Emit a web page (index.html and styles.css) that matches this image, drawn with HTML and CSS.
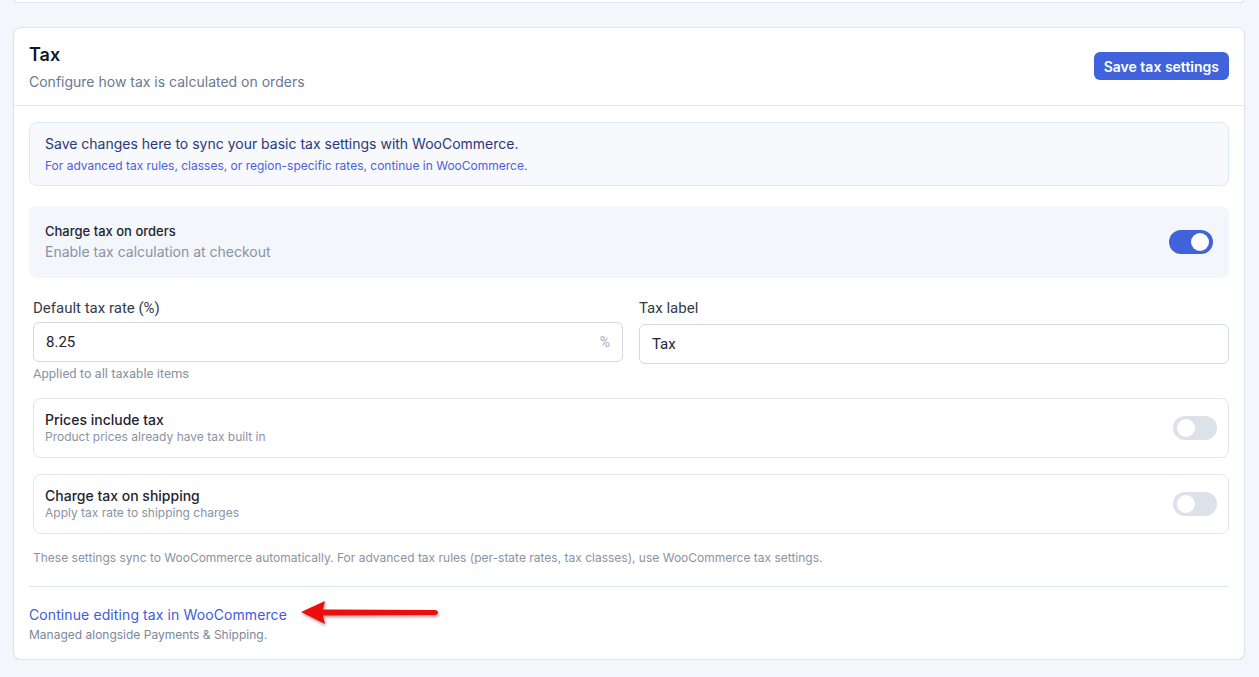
FILE: index.html
```html
<!DOCTYPE html>
<html lang="en">
<head>
<meta charset="utf-8">
<title>Tax settings</title>
<link rel="stylesheet" href="styles.css">
</head>
<body>
<div class="page">
  <div class="prev-card"></div>
  <section class="card">
    <header class="card-header">
      <div class="heading">
        <h2 class="title">Tax</h2>
        <p class="subtitle">Configure how tax is calculated on orders</p>
      </div>
      <button class="btn-primary" type="button">Save tax settings</button>
    </header>
    <div class="card-body">
      <div class="info-box">
        <p class="info-main">Save changes here to sync your basic tax settings with WooCommerce.</p>
        <p class="info-sub">For advanced tax rules, classes, or region-specific rates, continue in WooCommerce.</p>
      </div>

      <div class="main-toggle">
        <div class="toggle-text">
          <div class="main-toggle-title">Charge tax on orders</div>
          <div class="main-toggle-desc">Enable tax calculation at checkout</div>
        </div>
        <span class="switch on"><span class="knob"></span></span>
      </div>

      <div class="inner">
        <div class="fields">
          <div class="field">
            <label class="field-label">Default tax rate (%)</label>
            <div class="input">
              <span class="input-value">8.25</span>
              <span class="input-suffix">%</span>
            </div>
            <div class="field-hint">Applied to all taxable items</div>
          </div>
          <div class="field">
            <label class="field-label">Tax label</label>
            <div class="input input-alt">
              <span class="input-value">Tax</span>
            </div>
          </div>
        </div>

        <div class="option">
          <div class="toggle-text">
            <div class="option-title">Prices include tax</div>
            <div class="option-desc">Product prices already have tax built in</div>
          </div>
          <span class="switch"><span class="knob"></span></span>
        </div>
        <div class="option">
          <div class="toggle-text">
            <div class="option-title">Charge tax on shipping</div>
            <div class="option-desc">Apply tax rate to shipping charges</div>
          </div>
          <span class="switch"><span class="knob"></span></span>
        </div>

        <p class="note">These settings sync to WooCommerce automatically. For advanced tax rules (per-state rates, tax classes), use WooCommerce tax settings.</p>
      </div>

      <div class="footer">
        <div class="link-row">
          <a class="link" href="#">Continue editing tax in WooCommerce</a>
          <svg class="arrow" width="150" height="34" viewBox="0 0 150 34" aria-hidden="true">
            <defs>
              <filter id="sh" x="-10%" y="-40%" width="130%" height="190%">
                <feDropShadow dx="1" dy="2" stdDeviation="1.5" flood-color="#000" flood-opacity="0.35"/>
              </filter>
            </defs>
            <g filter="url(#sh)">
              <path d="M4 15 L28 4 L26 12.6 L138 13 Q141 13.5 141 15.5 Q141 17.5 138 18 L26 18.4 L28 27 Z" fill="#ee0d0d"/>
            </g>
          </svg>
        </div>
        <p class="footer-note">Managed alongside Payments &amp; Shipping.</p>
      </div>
    </div>
  </section>
</div>
</body>
</html>
```

FILE: styles.css
```css
* { box-sizing: border-box; }

html, body {
  margin: 0;
  padding: 0;
  background: #f3f6fb;
  font-family: Inter, "Noto Sans", sans-serif;
  color: #111827;
}

.page {
  padding: 0 14px 0 13px;
}

.prev-card {
  height: 3px;
  background: #fff;
  border: 1px solid #dfe3ec;
  border-top: none;
  border-radius: 0 0 8px 8px;
  margin: 0 1px;
}

.card {
  margin-top: 24px;
  background: #fff;
  border: 1px solid #dfe3ec;
  border-radius: 8px;
  box-shadow: 0 1px 2px rgba(20, 30, 60, 0.05);
}

.card-header {
  display: flex;
  align-items: center;
  justify-content: space-between;
  padding: 16px 15px 13px;
  border-bottom: 1px solid #e2e6ee;
}

.title {
  margin: 0;
  font-size: 18px;
  line-height: 22px;
  font-weight: 600;
  color: #111827;
}

.subtitle {
  margin: 6px 0 0;
  font-size: 14px;
  line-height: 20px;
  color: #6b7890;
}

.btn-primary {
  height: 28px;
  padding: 0 10px;
  border: none;
  border-radius: 6px;
  background: #4063dc;
  color: #fff;
  font-family: Inter, sans-serif;
  font-size: 14px;
  font-weight: 600;
  margin-top: -4px;
}

.card-body {
  padding: 16px 15px 16px;
}

.info-box {
  background: #f7f9fd;
  border: 1px solid #d9eaf8;
  border-radius: 8px;
  padding: 11px 15px 11px;
}

.info-main {
  margin: 0;
  font-size: 14px;
  line-height: 20px;
  color: #2a3878;
}

.info-sub {
  margin: 4px 0 0;
  font-size: 12px;
  line-height: 16px;
  color: #4e5fdc;
}

.main-toggle {
  margin-top: 20px;
  display: flex;
  align-items: center;
  justify-content: space-between;
  background: #f3f6fb;
  border-radius: 8px;
  padding: 16px;
}

.main-toggle-title {
  font-size: 13px;
  line-height: 18px;
  color: #1f2430;
  font-weight: 500;
}

.main-toggle-desc {
  margin-top: 2px;
  font-size: 14px;
  line-height: 20px;
  color: #8a93a3;
}

.switch {
  position: relative;
  display: inline-block;
  width: 44px;
  height: 24px;
  border-radius: 12px;
  background: #dde1ea;
  flex: none;
}

.switch .knob {
  position: absolute;
  top: 3px;
  left: 4px;
  width: 18px;
  height: 18px;
  border-radius: 50%;
  background: #fff;
}

.switch.on { background: #4063dc; }
.switch.on .knob { left: auto; right: 4px; }

.inner {
  padding-left: 4px;
}

.fields {
  margin-top: 20px;
  display: grid;
  grid-template-columns: 1fr 1fr;
  gap: 16px;
}

.field-label {
  display: block;
  font-family: Roboto, "Liberation Sans", sans-serif;
  font-size: 15px;
  line-height: 20px;
  font-weight: 400;
  color: #333c4d;
}

.input {
  margin-top: 4px;
  height: 40px;
  border: 1px solid #d3d8e6;
  border-radius: 6px;
  display: flex;
  align-items: center;
  justify-content: space-between;
  padding: 0 12px;
  font-family: Roboto, "Liberation Sans", sans-serif;
  font-size: 15px;
  color: #1f2430;
}

.input-alt { margin-top: 6px; }

.input-suffix {
  color: #a7aebc;
  font-size: 14px;
}

.field-hint {
  margin-top: 4px;
  font-family: Roboto, "Liberation Sans", sans-serif;
  font-size: 13px;
  line-height: 16px;
  color: #8a93a3;
}

.option {
  margin-top: 16px;
  display: flex;
  align-items: center;
  justify-content: space-between;
  border: 1px solid #e2e5ee;
  border-radius: 8px;
  padding: 12px 11px;
}

.option-title {
  font-size: 14px;
  line-height: 18px;
  font-weight: 500;
  color: #1f2430;
}

.option-desc {
  font-size: 12px;
  line-height: 16px;
  color: #8a93a3;
}

.note {
  margin: 16px 0 0;
  font-size: 12px;
  line-height: 16px;
  color: #8a93a3;
}

.footer {
  margin-top: 20px;
  border-top: 1px solid #dde3ea;
  padding-top: 18px;
}

.link-row {
  position: relative;
  display: flex;
  align-items: center;
  height: 20px;
}

.link {
  font-size: 14px;
  line-height: 20px;
  letter-spacing: 0.1px;
  color: #3f5bd8;
  text-decoration: none;
}

.arrow {
  position: absolute;
  left: 268px;
  top: -8px;
}

.footer-note {
  margin: 2px 0 0;
  font-size: 12px;
  line-height: 16px;
  color: #7d8799;
}
```
